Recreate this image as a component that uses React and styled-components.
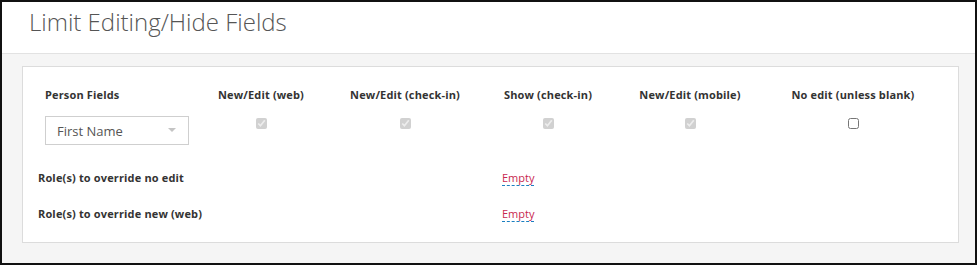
import React from "react"
import styled, { createGlobalStyle } from "styled-components"

const Global = createGlobalStyle`
  html, body {
    margin: 0;
    padding: 0;
    background: #ffffff;
  }
  body {
    font-family: "Open Sans", "Liberation Sans", sans-serif;
    color: #333;
  }
`

const Frame = styled.div`
  width: 977px;
  height: 265px;
  box-sizing: border-box;
  border: 2px solid #111;
  background: #f5f5f5;
  display: flex;
  flex-direction: column;
`

const Header = styled.div`
  height: 52px;
  flex: none;
  background: #fff;
  border-bottom: 1px solid #e2e2e2;
  padding: 4px 0 0 27px;
  box-sizing: border-box;
`

const Title = styled.h1`
  margin: 0;
  font-size: 24px;
  line-height: 32px;
  font-weight: 300;
  color: #555;
`

const Body = styled.div`
  padding: 12px 16px 0 20px;
`

const Panel = styled.div`
  height: 177px;
  box-sizing: border-box;
  background: #fff;
  border: 1px solid #dcdcdc;
  padding: 20px 14px 0 14px;
`

const FieldGrid = styled.div`
  display: grid;
  grid-template-columns: 152px 144px 144px 142px 142px 184px;
  row-gap: 13px;
`

const HeadCell = styled.div`
  font-size: 11px;
  line-height: 16px;
  font-weight: 700;
  letter-spacing: 0.15px;
  color: #333;
  text-align: ${p => (p.$left ? "left" : "center")};
  padding-left: ${p => (p.$left ? "8px" : "0")};
`

const Cell = styled.div`
  display: flex;
  justify-content: ${p => (p.$left ? "flex-start" : "center")};
  align-items: flex-start;
  padding-left: ${p => (p.$left ? "8px" : "0")};
`

const Select = styled.div`
  width: 144px;
  height: 29px;
  box-sizing: border-box;
  border: 1px solid #cfcfcf;
  display: flex;
  align-items: center;
  justify-content: space-between;
  padding: 0 12px 0 11px;
  font-size: 13px;
  color: #555;
`

const Caret = styled.span`
  width: 0;
  height: 0;
  border-left: 4px solid transparent;
  border-right: 4px solid transparent;
  border-top: 4px solid #c4c4c4;
  margin-top: -2px;
`

const Check = styled.input`
  width: 11px;
  height: 11px;
  margin: 2px 0 0 0;
`

const RoleRows = styled.div`
  display: flex;
  flex-direction: column;
  gap: 16px;
  margin-top: 23px;
  padding-left: 1px;
`

const RoleRow = styled.div`
  display: grid;
  grid-template-columns: 464px 1fr;
  align-items: center;
  line-height: 20px;
`

const RoleLabel = styled.div`
  font-size: 11px;
  font-weight: 700;
  letter-spacing: 0.15px;
  color: #333;
`

const Empty = styled.span`
  justify-self: start;
  font-size: 11px;
  line-height: 14px;
  color: #c8284f;
  border-bottom: 1px dashed #1a7fc1;
`

const columns = [
  { label: "New/Edit (web)", checked: true },
  { label: "New/Edit (check-in)", checked: true },
  { label: "Show (check-in)", checked: true },
  { label: "New/Edit (mobile)", checked: true },
  { label: "No edit (unless blank)", checked: false }
]

const roles = ["Role(s) to override no edit", "Role(s) to override new (web)"]

export default function App() {
  return (
    <>
      <Global />
      <Frame>
        <Header>
          <Title>Limit Editing/Hide Fields</Title>
        </Header>
        <Body>
          <Panel>
            <FieldGrid>
              <HeadCell $left>Person Fields</HeadCell>
              {columns.map(c => (
                <HeadCell key={c.label}>{c.label}</HeadCell>
              ))}
              <Cell $left>
                <Select>
                  <span>First Name</span>
                  <Caret />
                </Select>
              </Cell>
              {columns.map(c => (
                <Cell key={c.label}>
                  <Check type="checkbox" defaultChecked={c.checked} disabled={c.checked} />
                </Cell>
              ))}
            </FieldGrid>
            <RoleRows>
              {roles.map(r => (
                <RoleRow key={r}>
                  <RoleLabel>{r}</RoleLabel>
                  <Empty>Empty</Empty>
                </RoleRow>
              ))}
            </RoleRows>
          </Panel>
        </Body>
      </Frame>
    </>
  )
}
